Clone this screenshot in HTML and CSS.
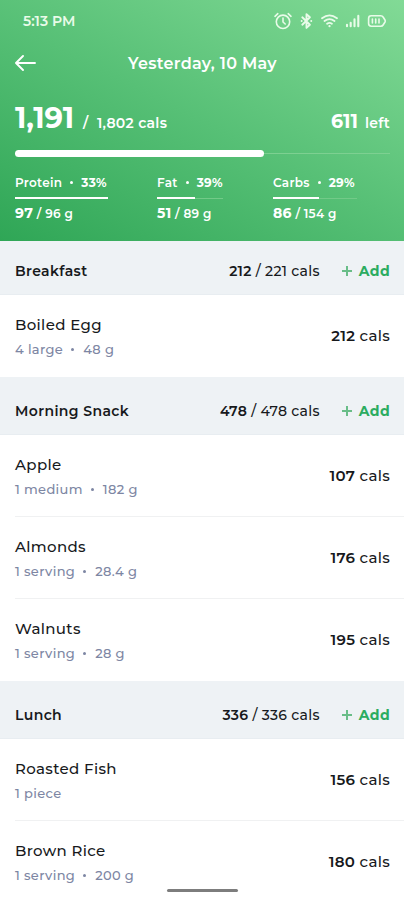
FILE: index.html
```
<!DOCTYPE html>
<html lang="en">
<head>
  <meta charset="UTF-8" />
  <meta name="viewport" content="width=device-width, initial-scale=1.0"/>
  <title>Food Diary</title>
  <link rel="stylesheet" href="styles.css">
</head>
<body>
  <div class="screen">
    <header class="header">
      <div class="status">
        <span class="time">5:13 PM</span>
        <svg class="status-icons" width="114" height="18" viewBox="0 0 114 18" fill="none" stroke="currentColor" stroke-width="1.6" stroke-linecap="round" stroke-linejoin="round">
          <!-- alarm -->
          <circle cx="9" cy="9.8" r="6.7"/>
          <path d="M9 6v4l2.2 2M1 4.300l2.800-2.600M17 4.300l-2.800-2.600"/>
          <!-- bluetooth -->
          <path d="M28.300 5.300l7.600 7.400-3.400 3.200V2.100l3.400 3.200-7.600 7.400M27.600 9h.1M37.200 9h.1" stroke-width="1.9"/>
          <!-- wifi -->
          <path d="M48 6.200q7.500-5.800 15 0M50.500 9q5-3.800 10 0M53.100 11.700q2.400-1.600 4.800 0" stroke-width="1.8"/>
          <path d="M55.500 14v.2" stroke-width="2.2"/>
          <!-- signal -->
          <path d="M73 12.800v1.400M76.700 10.700v3.500M80.500 7.300v6.900M84.300 3.900v10.300" stroke-width="2.100"/>
          <!-- battery -->
          <path d="M97.200 3.800h9.600q1.600 0 2.300 1.200l1.900 3q.6 1 0 2l-1.900 3q-.7 1.200-2.300 1.200h-9.600q-2.600 0-2.600-2.600V6.400q0-2.600 2.600-2.600z"/>
          <path d="M98.400 7v4M101.700 7v4M105 7v4"/>
        </svg>
      </div>
      <div class="title-bar">
        <svg class="back" width="22" height="18" viewBox="0 0 22 18" fill="none" stroke="currentColor" stroke-width="1.9" stroke-linecap="round" stroke-linejoin="round">
          <path d="M20 9H1.200M8 2L1 9l7 7"/>
        </svg>
        <h1 class="title">Yesterday, 10 May</h1>
      </div>
      <div class="summary">
        <div><strong class="eaten">1,191</strong><span class="goal">/&nbsp; 1,802 cals</span></div>
        <div><strong class="left">611</strong><span class="left-label">left</span></div>
      </div>
      <div class="progress"><div class="progress-fill"></div></div>
      <div class="macros">
        <div class="macro protein">
          <div class="macro-name">Protein<i></i><b>33%</b></div>
          <div class="track"><div class="fill"></div></div>
          <div class="macro-value"><b>97</b> / 96 g</div>
        </div>
        <div class="macro fat">
          <div class="macro-name">Fat<i></i><b>39%</b></div>
          <div class="track"><div class="fill"></div></div>
          <div class="macro-value"><b>51</b> / 89 g</div>
        </div>
        <div class="macro carbs">
          <div class="macro-name">Carbs<i></i><b>29%</b></div>
          <div class="track"><div class="fill"></div></div>
          <div class="macro-value"><b>86</b> / 154 g</div>
        </div>
      </div>
    </header>

    <section>
      <div class="meal first">
        <h2>Breakfast</h2>
        <span class="meal-cals"><b>212</b> / 221 cals</span>
        <span class="add"><span class="plus"></span>Add</span>
      </div>
      <div class="food">
        <div><div class="name">Boiled Egg</div><div class="amount">4 large<i></i>48 g</div></div>
        <span class="cals"><b>212</b> cals</span>
      </div>
    </section>

    <section>
      <div class="meal">
        <h2>Morning Snack</h2>
        <span class="meal-cals"><b>478</b> / 478 cals</span>
        <span class="add"><span class="plus"></span>Add</span>
      </div>
      <div class="food">
        <div><div class="name">Apple</div><div class="amount">1 medium<i></i>182 g</div></div>
        <span class="cals"><b>107</b> cals</span>
      </div>
      <div class="food">
        <div><div class="name">Almonds</div><div class="amount">1 serving<i></i>28.4 g</div></div>
        <span class="cals"><b>176</b> cals</span>
      </div>
      <div class="food">
        <div><div class="name">Walnuts</div><div class="amount">1 serving<i></i>28 g</div></div>
        <span class="cals"><b>195</b> cals</span>
      </div>
    </section>

    <section>
      <div class="meal">
        <h2>Lunch</h2>
        <span class="meal-cals"><b>336</b> / 336 cals</span>
        <span class="add"><span class="plus"></span>Add</span>
      </div>
      <div class="food">
        <div><div class="name">Roasted Fish</div><div class="amount">1 piece</div></div>
        <span class="cals"><b>156</b> cals</span>
      </div>
      <div class="food">
        <div><div class="name">Brown Rice</div><div class="amount">1 serving<i></i>200 g</div></div>
        <span class="cals"><b>180</b> cals</span>
      </div>
    </section>
    <div class="home-bar"></div>
  </div>
</body>
</html>
```

FILE: styles.css
```
* {
  box-sizing: border-box;
}
body {
  margin: 0;
  background: #fff;
  color: #17191c;
  font-family: Montserrat, Inter, sans-serif;
  font-weight: 500;
}
h1, h2 {
  margin: 0;
}
b {
  font-weight: 700;
}
/* separator dot */
i {
  display: inline-block;
  width: 3px;
  height: 3px;
  margin: 0 8px;
  border-radius: 50%;
  background: currentColor;
  vertical-align: 3px;
}
.screen {
  position: relative;
  height: 900px;
  overflow: hidden;
}
.header {
  height: 241px;
  padding: 0 14px 0 15px;
  color: #fff;
  background: linear-gradient(207deg, #82da96 0%, #57c076 50%, #2fa656 100%);
}
.status {
  display: flex;
  justify-content: space-between;
  align-items: center;
  height: 42px;
  padding: 0 2px 0 8px;
  color: #e9fbe9;
}
.time {
  font-size: 14px;
  font-weight: 600;
}
.title-bar {
  display: grid;
  grid-template-columns: 22px 1fr 22px;
  align-items: center;
  height: 42px;
}
.title {
  font-size: 16px;
  font-weight: 600;
  letter-spacing: 0.3px;
  text-align: center;
}
.summary {
  display: flex;
  justify-content: space-between;
  align-items: baseline;
  height: 66px;
  padding-top: 17px;
  line-height: 34px;
}
.eaten {
  font-size: 29px;
  font-weight: 700;
  letter-spacing: -0.1px;
  margin-right: 9px;
}
.goal, .left-label {
  font-size: 14px;
  font-weight: 600;
  letter-spacing: 0.3px;
}
.left {
  font-size: 19px;
  margin-right: 7px;
}
.progress {
  display: flex;
  align-items: center;
  height: 7px;
  background: linear-gradient(#7dd091, #7dd091) center / 100% 1px no-repeat;
}
.progress-fill {
  width: 249px;
  height: 7px;
  border-radius: 4px;
  background: #fff;
}
.macros {
  display: flex;
  padding-top: 17px;
}
.macro-name, .macro-value {
  font-size: 12px;
  font-weight: 600;
  line-height: 18px;
  letter-spacing: 0.3px;
  white-space: nowrap;
}
.macro-value {
  margin-top: 5px;
}
.macro-value b {
  font-size: 14px;
}
.track {
  height: 2px;
  margin-top: 5px;
  background: linear-gradient(#72ca88, #72ca88) center / 100% 1px no-repeat;
}
.fill {
  height: 2px;
  background: #fff;
}
.protein {
  width: 93px;
  margin-right: 49px;
}
.fat {
  width: 66px;
  margin-right: 50px;
}
.fat .fill {
  width: 38px;
}
.carbs {
  width: 84px;
}
.carbs .fill {
  width: 46px;
}
.meal {
  display: flex;
  align-items: center;
  height: 58px;
  padding: 11px 14px 0 15px;
  background: #eef2f5;
  border-bottom: 1px solid #e8edf1;
  font-size: 14px;
}
.meal.first {
  height: 54px;
  padding-top: 7px;
}
.meal h2 {
  flex: 1;
  font-size: 14px;
  font-weight: 600;
  letter-spacing: 0.4px;
}
.meal-cals {
  letter-spacing: 0.3px;
}
.meal-cals b, .cals b {
  font-weight: 600;
}
.add {
  display: flex;
  align-items: center;
  margin-left: 22px;
  color: #2bac60;
  font-weight: 700;
  letter-spacing: 0.4px;
}
.plus {
  width: 10px;
  height: 10px;
  margin-right: 7px;
  background:
    linear-gradient(#69bd88, #69bd88) center / 100% 2px no-repeat,
    linear-gradient(#69bd88, #69bd88) center / 2px 100% no-repeat;
}
.food {
  display: flex;
  justify-content: space-between;
  align-items: center;
  height: 82px;
  margin-left: 15px;
  padding-right: 14px;
  border-bottom: 1px solid #f0f1f2;
}
.food:last-child {
  border-bottom-color: transparent;
}
.name {
  font-size: 15px;
  line-height: 24px;
  letter-spacing: 0.35px;
}
.name, .amount {
  padding-top: 1px;
}
.amount {
  font-size: 13px;
  line-height: 22px;
  letter-spacing: 0.35px;
  color: #7d86a3;
}
.amount i {
  margin: 0 9px 0 8px;
}
.cals {
  font-size: 15px;
  letter-spacing: 0.3px;
}
.home-bar {
  position: absolute;
  left: 167px;
  top: 889px;
  width: 71px;
  height: 3px;
  border-radius: 2px;
  background: #7d7d7d;
}
```
